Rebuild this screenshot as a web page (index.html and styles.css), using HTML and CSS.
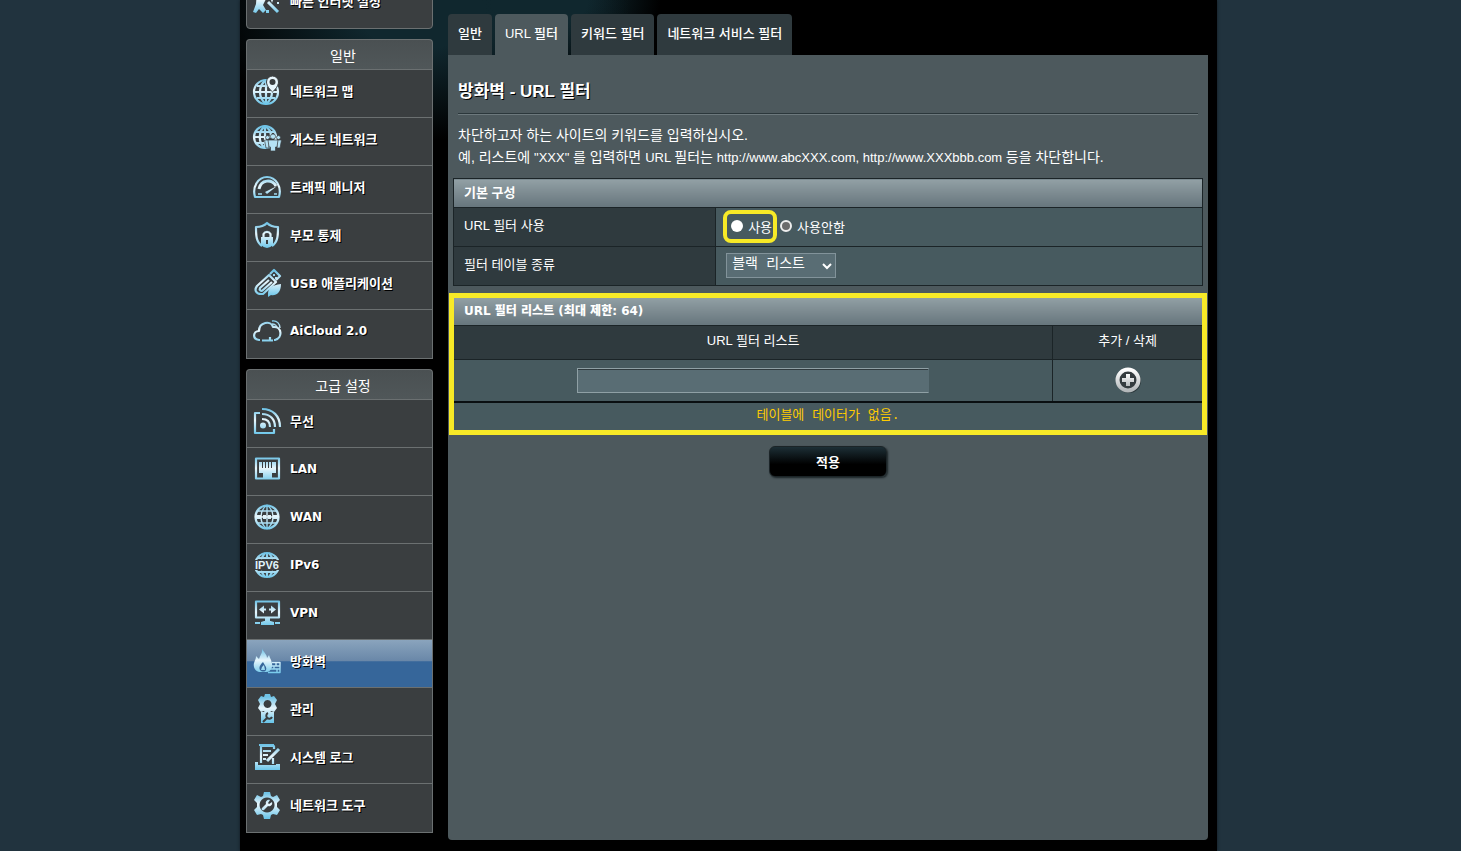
FILE: index.html
```
<!DOCTYPE html>
<html lang="ko">
<head>
<meta charset="utf-8">
<title>방화벽 - URL 필터</title>
<link rel="stylesheet" href="styles.css">
</head>
<body>
<svg class="defs" width="0" height="0" aria-hidden="true">
  <defs>
    <linearGradient id="ice" gradientUnits="userSpaceOnUse" x1="0" y1="2" x2="0" y2="27">
      <stop offset="0" stop-color="#6fc3e6"/>
      <stop offset="0.45" stop-color="#e8f6fc"/>
      <stop offset="1" stop-color="#6cc6ea"/>
    </linearGradient>
    <linearGradient id="steel" x1="0" y1="0" x2="0" y2="1">
      <stop offset="0" stop-color="#ffffff"/>
      <stop offset="1" stop-color="#b4b8ba"/>
    </linearGradient>
  </defs>
</svg>
<div class="page">
  <nav class="sidebar">
    <ul class="menu menu-quick">
      <li><a class="item" href="#">
        <svg class="icon" viewBox="0 0 28 28"><path class="f" d="M4 3l8 2 1 7-3 6 3 5-3 3-4-4-3 4-3-1 3-8z"/><path class="s w3" d="M15 15l10 10"/><path class="f" d="M19 8l1 3 3 1-3 1-1 3-1-3-3-1 3-1zM13 23h3v3h-3zM24 15h2v2h-2z"/></svg>
        <span>빠른 인터넷 설정</span></a></li>
    </ul>

    <section class="menu-group">
      <h2 class="menu-title">일반</h2>
      <ul class="menu">
        <li><a class="item" href="#">
          <svg class="icon" viewBox="0 0 28 28"><circle class="s w2" cx="13" cy="15" r="12"/><path class="s w2" d="M13 4v23M1 15h24M4 9h17M4 21h18M13 3c-8 6-8 18 0 24M13 3c8 6 8 18 0 24"/><path class="pin" d="M19.500-1a6 6 0 0 0-6 6c0 5 6 10 6 10s6-5 6-10a6 6 0 0 0-6-6z"/><circle class="hole" cx="19.500" cy="5" r="3"/></svg>
          <span>네트워크 맵</span></a></li>
        <li><a class="item" href="#">
          <svg class="icon" viewBox="0 0 28 28"><circle class="s w2" cx="12" cy="12" r="11"/><path class="s w2" d="M12 1v22M1 12h22M3 7h18M3 18h10M12 1c-7 5-7 17 0 22M12 1c5 3 6 7 6 10"/><g class="people"><circle cx="14.500" cy="12.500" r="2"/><circle cx="25.500" cy="12.500" r="2"/><path d="M11.500 15h4.500v8h-3zM24 15h4.500l-1.500 8h-3z"/><circle cx="20" cy="11.500" r="2.600"/><path d="M15 15h10l-1 7h-1.500v4h-5v-4H16z"/></g></svg>
          <span>게스트 네트워크</span></a></li>
        <li><a class="item" href="#">
          <svg class="icon" viewBox="0 0 28 28"><path class="s w2" d="M2 24c-3-10 3-20 12-20s15 10 12 20z"/><path class="s w3" d="M6 16c2-10 13-10 17-3"/><path class="f" d="M24 13l-10 8-2-2z"/><path class="s w1" d="M5 21h4M21 21h3"/></svg>
          <span>트래픽 매니저</span></a></li>
        <li><a class="item" href="#">
          <svg class="icon" viewBox="0 0 28 28"><path class="s w2" d="M9 25c-6-4-6-11-6-19 5 0 8-1 11-4 3 3 6 4 11 4 0 8 0 15-6 19"/><path class="s w2" d="M10.500 17v-4a4 4 0 0 1 7 0v4"/><path class="f" d="M8 16h12v8q-6 6-12 0z"/><path class="dark" d="M14 19v4"/></svg>
          <span>부모 통제</span></a></li>
        <li><a class="item" href="#">
          <svg class="icon" viewBox="0 0 28 28"><path class="s w2" d="M16 6L4 17c-3 4-1 8 4 8h2L23 13zM17 5l4-4 6 6-4 4"/><path class="s w2" d="M16 11l-9 8c-1 2 1 4 3 2l9-8"/><path class="f" d="M15 25c0-6 4-9 13-10 0 9-5 12-10 11l-3 2z"/><path class="f" d="M20 5h2v2h-2zM22 8h2v2h-2z"/></svg>
          <span><b class="latin">USB</b> 애플리케이션</span></a></li>
        <li><a class="item" href="#">
          <svg class="icon" viewBox="0 0 28 28"><path class="s w2" d="M7 23H6c-7-1-6-9 0-9 0-9 12-11 14-4 9-1 10 11 2 13h-1"/><path class="s w2" d="M9 23.500h11M17 20v3"/><path class="s w1" d="M19 7c3 0 5 2 5 4M19 4c5-1 8 3 8 7"/></svg>
          <span class="latin">AiCloud 2.0</span></a></li>
      </ul>
    </section>

    <section class="menu-group">
      <h2 class="menu-title">고급 설정</h2>
      <ul class="menu">
        <li><a class="item" href="#">
          <svg class="icon" viewBox="0 0 28 28"><path class="s w2" d="M7 6H2v20h19v-4"/><circle class="f" cx="10" cy="18.500" r="3"/><path class="s w2" d="M9 12c5 0 8 3 8 8M9 7c8 0 13 5 13 13M9 2c11 0 18 7 18 18"/></svg>
          <span>무선</span></a></li>
        <li><a class="item" href="#">
          <svg class="icon" viewBox="0 0 28 28"><path class="s w2" d="M3 3.500h23v20H3z"/><path class="f" d="M6 7h3v6h1V7h2v6h1V7h2v6h1V7h2v6h1V7h4v11h-4v5h-9v-5H6z"/></svg>
          <span class="latin">LAN</span></a></li>
        <li><a class="item" href="#">
          <svg class="icon" viewBox="0 0 28 28"><circle class="s w2" cx="14" cy="14" r="11.500"/><path class="s w1" d="M14 2v24M2 14h24M4 8h20M4 20h20M14 2c-8 6-8 18 0 24M14 2c8 6 8 18 0 24"/><path class="f" d="M3 12h5v4H3zM10 12h3v4h-3zM15 12h3v4h-3zM20 12h5v4h-5z"/></svg>
          <span class="latin">WAN</span></a></li>
        <li><a class="item" href="#">
          <svg class="icon" viewBox="0 0 28 28"><circle class="s w2" cx="14" cy="14" r="12"/><path class="s w2" d="M14 2v6M14 20v6M5 7h18M5 21h18M12 2L8 8M16 2l4 6M8 20l4 6M20 20l-4 6"/><path class="band" d="M0 9h28v10H0z"/><text class="badge" x="14" y="18" text-anchor="middle">IPV6</text></svg>
          <span class="latin">IPv6</span></a></li>
        <li><a class="item" href="#">
          <svg class="icon" viewBox="0 0 28 28"><path class="s w2" d="M3 2.500h23v16H3z"/><path class="f" d="M6 10.500l5-4v3h2v2h-2v3zM23 10.500l-5-4v3h-2v2h2v3zM12 18h5v4h-5zM8 23q6-3 13 0v3H8zM2 23h5v2H2zM22 23h5v2h-5z"/></svg>
          <span class="latin">VPN</span></a></li>
        <li class="current"><a class="item" href="#" aria-current="page">
          <svg class="icon" viewBox="0 0 28 28"><path class="f" fill-rule="evenodd" d="M9 1c1 4 5 6 5 10l2-3c1 4 4 7 3 12-1 3-3 5-6 5H6c-4-1-6-5-5-9 1-3 2-4 2-7l3 3c1-4 4-6 3-11zM10 15c-4 4-4 6-3 8 2 2 5 2 6 0 1-3-1-4-3-8z"/><path class="f" d="M9 20l2-2 1 5H8z"/><path class="s w1" d="M19 15.500h8v10H15M18 19h9M17 22h10M23 16v3M21 19v3M24 22v4"/></svg>
          <span>방화벽</span></a></li>
        <li><a class="item" href="#">
          <svg class="icon" viewBox="0 0 28 28"><path class="f" fill-rule="evenodd" d="M12-1h5l1 3 3-1 3 4-2 4 2 4-3 4-3-1-1 2h-5l-1-2-3 1-3-4 2-4-2-4 3-4 3 1zM14.500 5a4 4 0 1 0 .1 0z"/><path class="f" d="M8 17h13v11H8z"/><path class="tool" d="M10 27l5-5M15 18a3 3 0 1 0 4 4"/></svg>
          <span>관리</span></a></li>
        <li><a class="item" href="#">
          <svg class="icon" viewBox="0 0 28 28"><path class="s w2" d="M8 20V3h13v3M6 2h15M20 15v6"/><path class="s w2" d="M10 8h8M10 12h5M10 16h3"/><path class="s w3" d="M26 6L14 18"/><path class="f" d="M2 19h3v3h18v-1h4v6H2z"/></svg>
          <span>시스템 로그</span></a></li>
        <li><a class="item" href="#">
          <svg class="icon" viewBox="0 0 28 28"><path class="f" fill-rule="evenodd" d="M11 1h6l1 4 2 1 4-2 3 5-3 3v4l3 3-3 5-4-1-2 1-1 4h-6l-1-4-2-1-4 1-3-5 3-3v-4L1 9l3-5 4 2 2-1zM14 6.500a7.500 7.500 0 1 0 .1 0z"/><path class="f" d="M9 17l4-4c-1-3 2-5 4-4l-2 3 1 1 3-2c1 3-2 5-4 4l-4 4c-2 1-3-1-2-2z"/></svg>
          <span>네트워크 도구</span></a></li>
      </ul>
    </section>
  </nav>

  <main class="content">
    <div class="tabs">
      <a class="tab" href="#">일반</a>
      <a class="tab active" href="#" aria-current="page">URL 필터</a>
      <a class="tab" href="#">키워드 필터</a>
      <a class="tab" href="#">네트워크 서비스 필터</a>
    </div>

    <form class="panel">
      <h1 class="title">방화벽 - URL 필터</h1>
      <p class="intro">차단하고자 하는 사이트의 키워드를 입력하십시오.<br>예, 리스트에 <span class="ascii">"XXX" </span>를 입력하면 <span class="ascii">URL </span>필터는 <span class="ascii">http://www.abcXXX.com, http://www.XXXbbb.com </span>등을 차단합니다.</p>

      <table class="grid settings">
        <colgroup><col class="col-label"><col></colgroup>
        <thead><tr><th class="bar" colspan="2">기본 구성</th></tr></thead>
        <tbody>
          <tr>
            <th scope="row">URL 필터 사용</th>
            <td><div class="options">
              <label class="option marked"><input type="radio" name="filter"><span>사용</span></label>
              <label class="option"><input type="radio" name="filter" checked><span>사용안함</span></label>
            </div></td>
          </tr>
          <tr>
            <th scope="row"><label for="kind">필터 테이블 종류</label></th>
            <td><div class="select-wrap"><select id="kind"><option>블랙 리스트</option></select><svg class="chevron" viewBox="0 0 10 8" aria-hidden="true"><path d="M1 2l4 4 4-4"/></svg></div></td>
          </tr>
        </tbody>
      </table>

      <div class="highlight">
        <table class="grid list">
          <colgroup><col><col class="col-action"></colgroup>
          <thead>
            <tr><th class="bar heavy" colspan="2">URL 필터 리스트 (최대 제한: 64)</th></tr>
            <tr><th scope="col"><label for="keyword">URL 필터 리스트</label></th><th scope="col">추가 / 삭제</th></tr>
          </thead>
          <tbody>
            <tr>
              <td><input class="keyword" id="keyword" type="text"></td>
              <td><button class="add" type="button" aria-label="추가"><svg viewBox="0 0 28 28"><circle class="shade" cx="15" cy="15" r="12"/><circle class="ring" cx="14" cy="14" r="10.500"/><path class="plus" d="M12 8h4v4h4v4h-4v4h-4v-4H8v-4h4z"/></svg></button></td>
            </tr>
            <tr class="empty"><td colspan="2">테이블에 데이터가 없음.</td></tr>
          </tbody>
        </table>
      </div>

      <button class="apply" type="button">적용</button>
    </form>
  </main>
</div>
</body>
</html>
```

FILE: styles.css
```
* { box-sizing: border-box; }

body {
  margin: 0;
  padding-right: 4px;
  height: 100vh;
  overflow: hidden;
  background: #21333e;
  color: #fff;
  font-family: "Liberation Sans", "Noto Sans CJK KR", sans-serif;
  font-size: 13px;
}

.defs { position: absolute; }
a { color: inherit; text-decoration: none; }
h1, h2, p, ul { margin: 0; padding: 0; }
ul { list-style: none; }

.page {
  display: flex;
  align-items: stretch;
  gap: 15px;
  max-width: 977px;
  min-height: 100vh;
  margin: 0 auto;
  padding: 0 9px 11px 6px;
  background:
    radial-gradient(ellipse 210px 130px at 180px 10px, #10272e 30%, rgba(16, 39, 46, 0) 100%),
    radial-gradient(ellipse 120px 70px at 300px 0, #10272e 40%, rgba(16, 39, 46, 0) 100%),
    #000;
  box-shadow: 0 0 3px #101a20;
}

/* Sidebar */
.sidebar { flex: 0 0 187px; }

.menu {
  padding-bottom: 1px;
  border: 1px solid #6b7071;
  background: #3a3e40;
}
.menu li + li { border-top: 1px solid #6b7071; }

.menu-quick {
  margin-top: -21px;
  border-radius: 4px;
}
.menu-group { margin-top: 10px; }
.menu-title {
  height: 30px;
  padding-left: 7px;
  border: 1px solid #6b7071;
  border-bottom: 0;
  border-radius: 4px 4px 0 0;
  background: linear-gradient(#4a5052, #505759);
  font-family: "Noto Sans CJK KR", sans-serif;
  font-size: 14px;
  font-weight: 400;
  line-height: 30px;
  text-align: center;
}

.item {
  display: flex;
  align-items: center;
  gap: 9px;
  height: 47px;
  padding: 0 6px 5px;
  font-family: "Noto Sans CJK KR", sans-serif;
  font-size: 13px;
  font-weight: 700;
  line-height: 20px;
  text-shadow: 1px 1px 0 #000;
}
.latin {
  font-family: "DejaVu Sans", sans-serif;
  font-size: 12px;
  font-weight: 700;
}
.current { background: linear-gradient(#8aa4bd 0, #6987a8 45%, #36669a 46%, #36669a 100%); }

.icon { flex: none; width: 28px; height: 28px; overflow: visible; }
.icon .s { fill: none; stroke: url(#ice); stroke-linejoin: round; }
.icon .f { fill: url(#ice); }
.w1 { stroke-width: 1.4; }
.w2 { stroke-width: 2.2; }
.w3 { stroke-width: 3; }
.pin { fill: #e8f6fc; stroke: #3a3e40; }
.hole, .band { fill: #3a3e40; }
.people { fill: #b5e2f4; stroke: #3a3e40; stroke-width: 0.7; }
.dark, .tool { fill: none; stroke: #3a3e40; stroke-width: 2; }
.badge {
  fill: #e0f4fc;
  font-family: "Liberation Sans", sans-serif;
  font-size: 11px;
  font-weight: 700;
  text-shadow: none;
}

/* Content */
.content {
  display: flex;
  flex: 1;
  flex-direction: column;
  min-width: 0;
  padding-top: 14px;
}
.tabs { display: flex; gap: 3px; }
.tab {
  height: 41px;
  padding: 0 10px;
  border-radius: 4px 4px 0 0;
  background: #2f3a3e;
  font-weight: 500;
  line-height: 40px;
}
.tab.active { background: #4d595d; }

.panel {
  flex: 1;
  padding: 24px 5px;
  border-radius: 0 0 4px 4px;
  background: #4d595d;
}
.title {
  margin: 0 5px;
  padding-bottom: 8px;
  border-bottom: 1px solid #2b373b;
  box-shadow: 0 1px 0 #6d797d;
  font-size: 17px;
  line-height: 26px;
  text-shadow: 1px 1px 0 #000;
}
.intro {
  margin: 10px 5px 9px;
  font-size: 14px;
  line-height: 22px;
}
.ascii { font-size: 13px; }

.grid {
  width: 100%;
  border: 1px solid #1b2427;
  border-collapse: collapse;
  table-layout: fixed;
}
.col-label { width: 35%; }
.col-action { width: 20%; }
.grid th, .grid td {
  padding: 0 10px;
  border: 1px solid #1b2427;
}
.grid th { background: #2f3a3e; font-weight: 400; text-align: left; }
.grid td { background: #475a5f; }
.grid .bar {
  height: 29px;
  padding-bottom: 4px;
  background: linear-gradient(#92a0a5, #66757c);
  font-weight: 700;
}
.grid .heavy {
  font-family: "DejaVu Sans", "Noto Sans CJK KR", sans-serif;
  font-size: 12px;
  font-weight: 900;
}

.settings tbody tr { height: 39px; }
.settings tbody th { padding-bottom: 5px; }
.settings tbody td { padding-bottom: 2px; }
.options { display: flex; align-items: center; gap: 8px; }
.option { position: relative; display: flex; align-items: center; gap: 5px; }
.option input {
  appearance: none;
  width: 12px;
  height: 12px;
  margin: 0;
  border-radius: 50%;
  background: #fff;
}
.option input:checked { border: 2px solid #eee; background: #6b6b6b; }
.marked::after {
  content: "";
  position: absolute;
  inset: -7px -5px -7px -3px;
  border: 4px solid #f8ea27;
  border-radius: 8px;
  pointer-events: none;
}
.options .marked { padding-left: 5px; }

.select-wrap { position: relative; width: 110px; }
.select-wrap select {
  display: block;
  appearance: none;
  width: 100%;
  height: 25px;
  padding: 0 5px 2px;
  border: 1px solid #82939a;
  border-radius: 0;
  background: #596d74;
  color: #fff;
  font-family: "Liberation Mono", "Noto Sans CJK KR", monospace;
  font-size: 14px;
}
.chevron {
  position: absolute;
  top: 9px;
  right: 4px;
  width: 10px;
  height: 8px;
  fill: none;
  stroke: #fff;
  stroke-width: 2;
  pointer-events: none;
}

.highlight { position: relative; margin-top: 10px; }
.highlight::after {
  content: "";
  position: absolute;
  inset: -3px -4px -4px;
  border: 5px solid #f8ea27;
  pointer-events: none;
}
.list th, .list td { text-align: center; }
.list .bar { text-align: left; }
.list thead th:not(.bar) { height: 34px; padding-bottom: 6px; }
.list tbody td { height: 42px; }
.keyword {
  display: block;
  width: 61%;
  min-width: 200px;
  height: 25px;
  margin: 0 auto;
  border: 1px solid #8fa0a5;
  border-right-color: #596d74;
  background: #596d74;
  box-shadow: inset 0 1px 0 #2f3a3e;
  color: #fff;
  font: inherit;
}
.add {
  display: block;
  width: 28px;
  height: 28px;
  margin: 0 auto;
  padding: 0;
  border: 0;
  background: none;
}
.add svg { display: block; }
.shade { fill: #2b373b; }
.ring { fill: #353c3f; stroke: url(#steel); stroke-width: 4; }
.plus { fill: url(#steel); }
.list .empty td {
  height: 29px;
  padding-bottom: 0;
  border-top: 2px solid #0a0f11;
  color: #fc0;
  font-family: "Liberation Mono", "Noto Sans CJK KR", monospace;
  line-height: 20px;
}

.apply {
  display: block;
  width: 118px;
  height: 31px;
  margin: 15px auto 0;
  padding: 0;
  border: 1px solid #1b2427;
  border-radius: 6px;
  background: linear-gradient(#1d2f36, #000 60%);
  box-shadow: 1px 1px 2px #1b2427;
  color: #fff;
  font: 700 13px "Noto Sans CJK KR", sans-serif;
}
```
